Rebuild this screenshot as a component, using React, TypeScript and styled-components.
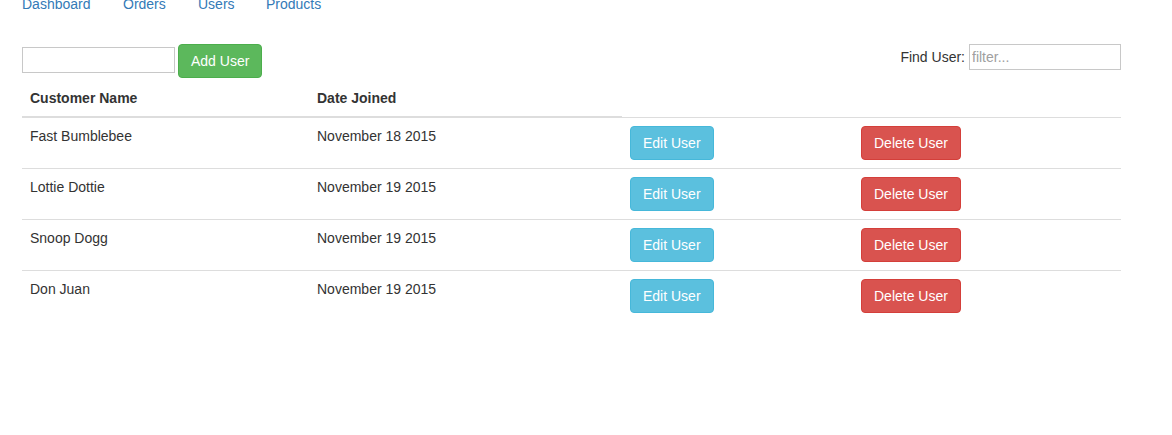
import React from "react";
import styled, { createGlobalStyle } from "styled-components";

const GlobalStyle = createGlobalStyle`
  * { box-sizing: border-box; }
  body {
    margin: 0;
    background: #fff;
    font-family: "Liberation Sans", Arial, Helvetica, sans-serif;
    font-size: 14px;
    line-height: 20px;
    color: #333;
  }
`;

const Page = styled.div`
  padding: 0 51px 0 22px;
  overflow: hidden;
`;

const Nav = styled.nav`
  display: flex;
  margin-top: -6px;
  height: 20px;
`;

const NavLink = styled.a<{ $w: number }>`
  display: block;
  width: ${(p) => p.$w}px;
  color: #337ab7;
  text-decoration: none;
  line-height: 20px;
`;

const Toolbar = styled.div`
  display: flex;
  justify-content: space-between;
  align-items: flex-start;
  margin-top: 30px;
`;

const Group = styled.div`
  display: flex;
  align-items: flex-start;
`;

const TextInput = styled.input<{ $w: number; $mt?: number }>`
  width: ${(p) => p.$w}px;
  height: 26px;
  margin: ${(p) => p.$mt ?? 0}px 0 0 0;
  padding: 1px 2px;
  border: 1px solid #c8c8c8;
  border-radius: 0;
  font-family: "Liberation Sans", Arial, sans-serif;
  font-size: 14px;
  color: #333;
  outline: none;
  &::placeholder { color: #a0a0a0; }
`;

const Label = styled.label`
  line-height: 26px;
  margin-right: 4px;
  color: #333;
`;

const Button = styled.button<{ $variant: "success" | "info" | "danger" }>`
  height: 34px;
  padding: 6px 12px;
  font-family: "Liberation Sans", Arial, sans-serif;
  font-size: 14px;
  line-height: 20px;
  color: #fff;
  border-radius: 4px;
  cursor: pointer;
  background: ${(p) =>
    p.$variant === "success" ? "#5cb85c" : p.$variant === "info" ? "#5bc0de" : "#d9534f"};
  border: 1px solid
    ${(p) =>
      p.$variant === "success" ? "#4cae4c" : p.$variant === "info" ? "#46b8da" : "#d43f3a"};
`;

const AddButton = styled(Button)`
  margin-left: 3px;
`;

const Table = styled.table`
  width: 1099px;
  margin-top: 2px;
  border-collapse: collapse;
  border-spacing: 0;
  table-layout: fixed;
`;

const Th = styled.th`
  padding: 8px;
  text-align: left;
  font-weight: bold;
  line-height: 20px;
  vertical-align: bottom;
  border-bottom: 2px solid #ddd;
`;

const Td = styled.td`
  padding: 8px;
  line-height: 20px;
  vertical-align: top;
  border-top: 1px solid #ddd;
`;

const users = [
  { name: "Fast Bumblebee", date: "November 18 2015" },
  { name: "Lottie Dottie", date: "November 19 2015" },
  { name: "Snoop Dogg", date: "November 19 2015" },
  { name: "Don Juan", date: "November 19 2015" },
];

export default function App() {
  return (
    <>
      <GlobalStyle />
      <Page>
        <Nav>
          <NavLink href="#" $w={101}>Dashboard</NavLink>
          <NavLink href="#" $w={75}>Orders</NavLink>
          <NavLink href="#" $w={68}>Users</NavLink>
          <NavLink href="#" $w={80}>Products</NavLink>
        </Nav>
        <Toolbar>
          <Group>
            <TextInput $w={153} $mt={3} />
            <AddButton $variant="success">Add User</AddButton>
          </Group>
          <Group>
            <Label>Find User:</Label>
            <TextInput $w={152} placeholder="filter..." />
          </Group>
        </Toolbar>
        <Table>
          <colgroup>
            <col style={{ width: 287 }} />
            <col style={{ width: 313 }} />
            <col style={{ width: 231 }} />
            <col style={{ width: 268 }} />
          </colgroup>
          <thead>
            <tr>
              <Th>Customer Name</Th>
              <Th>Date Joined</Th>
            </tr>
          </thead>
          <tbody>
            {users.map((u) => (
              <tr key={u.name}>
                <Td>{u.name}</Td>
                <Td>{u.date}</Td>
                <Td>
                  <Button $variant="info">Edit User</Button>
                </Td>
                <Td>
                  <Button $variant="danger">Delete User</Button>
                </Td>
              </tr>
            ))}
          </tbody>
        </Table>
      </Page>
    </>
  );
}
